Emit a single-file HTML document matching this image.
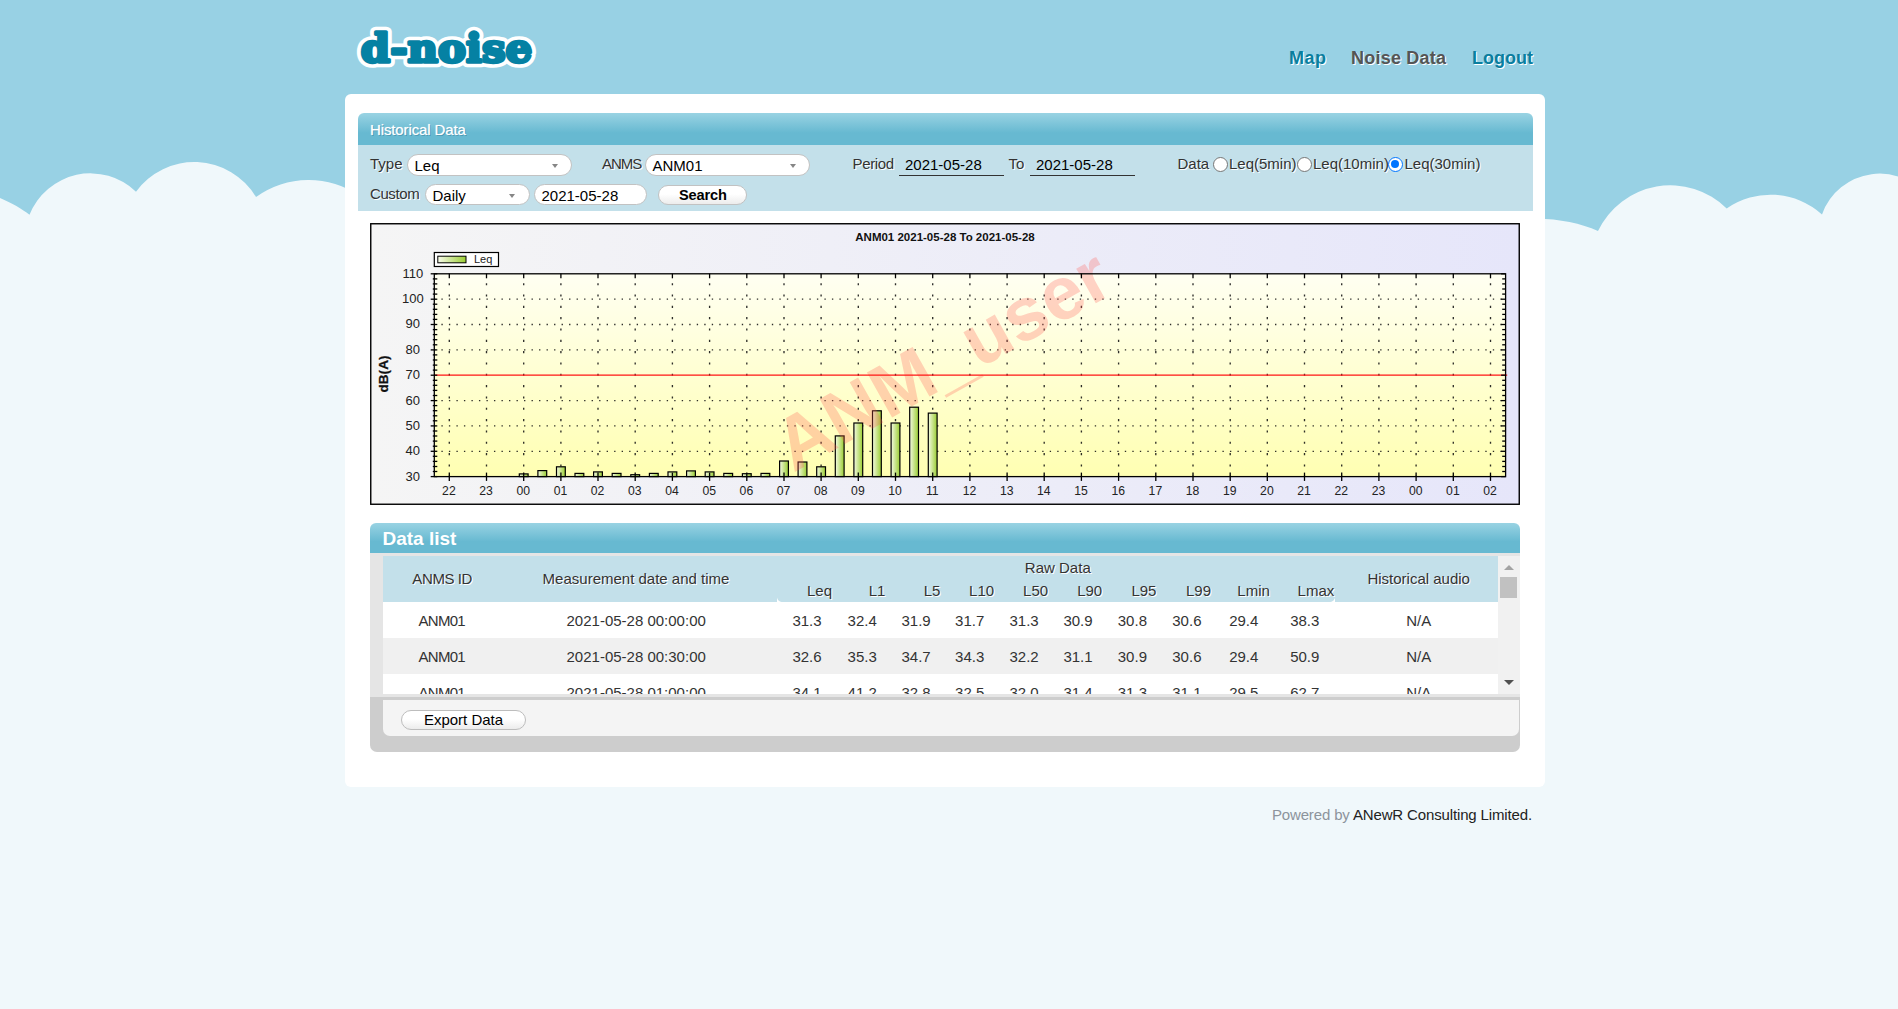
<!DOCTYPE html><html><head><meta charset="utf-8"><title>d-noise</title><style>
html,body{margin:0;padding:0}
body{width:1898px;height:1009px;overflow:hidden;position:relative;background:#f0f8fb;
 font-family:"Liberation Sans",sans-serif;font-size:15px;color:#333}
.sky{position:absolute;left:0;top:0;width:1898px;height:232px;background:#98d1e4}
.clouds{position:absolute;left:0;top:0}
.abs{position:absolute;white-space:nowrap}
.logo{position:absolute;left:345px;top:15px}
.nav a{position:absolute;top:47px;font-weight:bold;font-size:18px;line-height:22px;text-decoration:none;color:#0a7e9f;text-shadow:1px 1px 0 #fff;white-space:nowrap}
.nav a.cur{color:#555}
.panel{position:absolute;left:345px;top:94px;width:1200px;height:693px;background:#fff;border-radius:6px}
.bar{position:absolute;background:linear-gradient(to bottom,#99d3e3 0%,#67b9d1 62%,#67b9d1 100%);border-radius:6px 6px 0 0;color:#fff}
.form{position:absolute;left:358px;top:145px;width:1175px;height:65.5px;background:#c3e0ea}
.lbl{position:absolute;white-space:nowrap;font-size:15px;line-height:18px;color:#333;text-shadow:1px 1px 0 #fff}
.pill{position:absolute;box-sizing:border-box;background:#fff;border:1px solid #c2c2c2;border-radius:11px;font-size:15px;color:#000;white-space:nowrap}
.pill span{position:absolute;left:6.5px;top:2px;line-height:18px}
.pill i{position:absolute;width:0;height:0;border-left:3.4px solid transparent;border-right:3.4px solid transparent;border-top:4.2px solid #868686;top:9.3px}
.uinp{position:absolute;box-sizing:border-box;border-bottom:1px solid #333;font-size:15px;color:#000;line-height:18px;white-space:nowrap}
.td,.th{position:absolute;width:200px;text-align:center;font-size:15px;line-height:20px;white-space:nowrap;color:#333}
.th{text-shadow:1px 1px 0 #fff}
.radio{position:absolute;box-sizing:border-box;width:15.2px;height:15.2px;border-radius:50%;border:1.3px solid #767676;background:#fff}
.radio.on{border:1.7px solid #0075ff}
.radio.on::after{content:"";position:absolute;left:1.6px;top:1.6px;width:8.6px;height:8.6px;border-radius:50%;background:#0075ff}
</style></head><body><div class="sky"></div><svg class="clouds" width="1898" height="260" viewBox="0 0 1898 260"><path d="M 0 260 L 0 198 C 12 203 22 209 29.5 214.8 A 65.6 65.6 0 0 1 136.0 191.7 A 72.0 72.0 0 0 1 256.0 197.0 A 90.0 90.0 0 0 1 360.0 196.0 L 360 260 Z" fill="#f0f8fb"/><path d="M 1530 260 L 1530 219 C 1555 218 1580 223 1598 231 A 80.1 80.1 0 0 1 1726.7 208.5 A 76.9 76.9 0 0 1 1822.0 214.4 A 61.2 61.2 0 0 1 1930.0 200.0 L 1930 260 Z" fill="#f0f8fb"/></svg><svg class="logo" width="210" height="70" viewBox="0 0 210 70"><text x="15.8" y="47.3" font-family="DejaVu Serif, Liberation Serif, serif" font-weight="bold" font-size="39.5" textLength="171.5" lengthAdjust="spacingAndGlyphs" fill="#fff" stroke="#fff" stroke-width="10.6" stroke-linejoin="round">d-noise</text><text x="15.8" y="47.3" font-family="DejaVu Serif, Liberation Serif, serif" font-weight="bold" font-size="39.5" textLength="171.5" lengthAdjust="spacingAndGlyphs" fill="#0581a3" stroke="#0581a3" stroke-width="3.3" stroke-linejoin="round">d-noise</text></svg><div class="nav"><a style="left:1289px;letter-spacing:0.5px" href="#">Map</a><a class="cur" style="left:1351px;letter-spacing:0.22px" href="#">Noise Data</a><a style="left:1472px" href="#">Logout</a></div><div class="panel"></div><div class="form"></div><div class="bar" style="left:358px;top:113px;width:1175px;height:32px"><span class="abs" style="left:12px;top:8px;font-size:15px;line-height:18px;letter-spacing:-0.12px;text-shadow:0 0 1px rgba(255,255,255,.6),1px 1px 0 rgba(0,70,100,.3)">Historical Data</span></div><span class="lbl" style="left:370px;top:155px;letter-spacing:0px">Type</span><div class="pill" style="left:407px;top:154px;width:164.5px;height:21.6px"><span>Leq</span><i style="left:144.1px"></i></div><span class="lbl" style="left:602px;top:155px;letter-spacing:-1.05px">ANMS</span><div class="pill" style="left:645px;top:154px;width:164.5px;height:21.6px"><span>ANM01</span><i style="left:144.1px"></i></div><span class="lbl" style="left:852.5px;top:155px;letter-spacing:-0.35px">Period</span><div class="uinp" style="left:899px;top:154px;width:105px;height:22px"><span class="abs" style="left:6px;top:2px">2021-05-28</span></div><span class="lbl" style="left:1008.5px;top:155px;letter-spacing:0px">To</span><div class="uinp" style="left:1030px;top:154px;width:105px;height:22px"><span class="abs" style="left:6px;top:2px">2021-05-28</span></div><span class="lbl" style="left:1177.5px;top:155px;letter-spacing:0px">Data</span><span class="radio" style="left:1212.9px;top:157px"></span><span class="lbl" style="left:1229px;top:155px;letter-spacing:0px">Leq(5min)</span><span class="radio" style="left:1296.6px;top:157px"></span><span class="lbl" style="left:1313px;top:155px;letter-spacing:0px">Leq(10min)</span><span class="radio on" style="left:1388px;top:157px"></span><span class="lbl" style="left:1404.5px;top:155px;letter-spacing:0px">Leq(30min)</span><span class="lbl" style="left:370px;top:185px;letter-spacing:-0.4px">Custom</span><div class="pill" style="left:425px;top:184.2px;width:104.5px;height:21.2px"><span>Daily</span><i style="left:82.9px"></i></div><div class="pill" style="left:534px;top:184.2px;width:112.5px;height:21.2px"><span>2021-05-28</span></div><div class="pill" style="left:658.3px;top:185.3px;width:89.2px;height:19.5px;border-radius:10px;background:linear-gradient(#fff 45%,#ececec)"><span style="left:0;width:87.2px;text-align:center;font-weight:bold;font-size:14.6px;letter-spacing:-0.15px;top:0">Search</span></div><svg class="chart" style="position:absolute;left:370px;top:223px" width="1150" height="282" viewBox="0 0 1150 282"><defs><linearGradient id="gbg" x1="0" y1="0" x2="1" y2="0"><stop offset="0" stop-color="#f5f5f5"/><stop offset="1" stop-color="#e6e6fa"/></linearGradient><linearGradient id="gpl" x1="0" y1="0" x2="0" y2="1"><stop offset="0" stop-color="#fffff2"/><stop offset="1" stop-color="#ffffb2"/></linearGradient><linearGradient id="gbar" x1="0" y1="0" x2="1" y2="0"><stop offset="0" stop-color="#f4fae2"/><stop offset="1" stop-color="#9acd32"/></linearGradient></defs><rect x="0.75" y="0.75" width="1148.5" height="280.5" fill="url(#gbg)" stroke="#000" stroke-width="1.4"/><rect x="64.30000000000001" y="50.80000000000001" width="1071.3" height="202.8" fill="url(#gpl)"/><g stroke="#111" stroke-opacity="0.88" fill="none"><line x1="79.3" y1="50.80000000000001" x2="79.3" y2="253.60000000000002" stroke-dasharray="2.1 9.23" stroke-dashoffset="2.0" stroke-width="1.35"/><line x1="116.5" y1="50.80000000000001" x2="116.5" y2="253.60000000000002" stroke-dasharray="2.1 9.23" stroke-dashoffset="2.0" stroke-width="1.35"/><line x1="153.7" y1="50.80000000000001" x2="153.7" y2="253.60000000000002" stroke-dasharray="2.1 9.23" stroke-dashoffset="2.0" stroke-width="1.35"/><line x1="190.9" y1="50.80000000000001" x2="190.9" y2="253.60000000000002" stroke-dasharray="2.1 9.23" stroke-dashoffset="2.0" stroke-width="1.35"/><line x1="228.0" y1="50.80000000000001" x2="228.0" y2="253.60000000000002" stroke-dasharray="2.1 9.23" stroke-dashoffset="2.0" stroke-width="1.35"/><line x1="265.2" y1="50.80000000000001" x2="265.2" y2="253.60000000000002" stroke-dasharray="2.1 9.23" stroke-dashoffset="2.0" stroke-width="1.35"/><line x1="302.4" y1="50.80000000000001" x2="302.4" y2="253.60000000000002" stroke-dasharray="2.1 9.23" stroke-dashoffset="2.0" stroke-width="1.35"/><line x1="339.6" y1="50.80000000000001" x2="339.6" y2="253.60000000000002" stroke-dasharray="2.1 9.23" stroke-dashoffset="2.0" stroke-width="1.35"/><line x1="376.8" y1="50.80000000000001" x2="376.8" y2="253.60000000000002" stroke-dasharray="2.1 9.23" stroke-dashoffset="2.0" stroke-width="1.35"/><line x1="414.0" y1="50.80000000000001" x2="414.0" y2="253.60000000000002" stroke-dasharray="2.1 9.23" stroke-dashoffset="2.0" stroke-width="1.35"/><line x1="451.1" y1="50.80000000000001" x2="451.1" y2="253.60000000000002" stroke-dasharray="2.1 9.23" stroke-dashoffset="2.0" stroke-width="1.35"/><line x1="488.3" y1="50.80000000000001" x2="488.3" y2="253.60000000000002" stroke-dasharray="2.1 9.23" stroke-dashoffset="2.0" stroke-width="1.35"/><line x1="525.5" y1="50.80000000000001" x2="525.5" y2="253.60000000000002" stroke-dasharray="2.1 9.23" stroke-dashoffset="2.0" stroke-width="1.35"/><line x1="562.7" y1="50.80000000000001" x2="562.7" y2="253.60000000000002" stroke-dasharray="2.1 9.23" stroke-dashoffset="2.0" stroke-width="1.35"/><line x1="599.9" y1="50.80000000000001" x2="599.9" y2="253.60000000000002" stroke-dasharray="2.1 9.23" stroke-dashoffset="2.0" stroke-width="1.35"/><line x1="637.1" y1="50.80000000000001" x2="637.1" y2="253.60000000000002" stroke-dasharray="2.1 9.23" stroke-dashoffset="2.0" stroke-width="1.35"/><line x1="674.2" y1="50.80000000000001" x2="674.2" y2="253.60000000000002" stroke-dasharray="2.1 9.23" stroke-dashoffset="2.0" stroke-width="1.35"/><line x1="711.4" y1="50.80000000000001" x2="711.4" y2="253.60000000000002" stroke-dasharray="2.1 9.23" stroke-dashoffset="2.0" stroke-width="1.35"/><line x1="748.6" y1="50.80000000000001" x2="748.6" y2="253.60000000000002" stroke-dasharray="2.1 9.23" stroke-dashoffset="2.0" stroke-width="1.35"/><line x1="785.8" y1="50.80000000000001" x2="785.8" y2="253.60000000000002" stroke-dasharray="2.1 9.23" stroke-dashoffset="2.0" stroke-width="1.35"/><line x1="823.0" y1="50.80000000000001" x2="823.0" y2="253.60000000000002" stroke-dasharray="2.1 9.23" stroke-dashoffset="2.0" stroke-width="1.35"/><line x1="860.2" y1="50.80000000000001" x2="860.2" y2="253.60000000000002" stroke-dasharray="2.1 9.23" stroke-dashoffset="2.0" stroke-width="1.35"/><line x1="897.3" y1="50.80000000000001" x2="897.3" y2="253.60000000000002" stroke-dasharray="2.1 9.23" stroke-dashoffset="2.0" stroke-width="1.35"/><line x1="934.5" y1="50.80000000000001" x2="934.5" y2="253.60000000000002" stroke-dasharray="2.1 9.23" stroke-dashoffset="2.0" stroke-width="1.35"/><line x1="971.7" y1="50.80000000000001" x2="971.7" y2="253.60000000000002" stroke-dasharray="2.1 9.23" stroke-dashoffset="2.0" stroke-width="1.35"/><line x1="1008.9" y1="50.80000000000001" x2="1008.9" y2="253.60000000000002" stroke-dasharray="2.1 9.23" stroke-dashoffset="2.0" stroke-width="1.35"/><line x1="1046.1" y1="50.80000000000001" x2="1046.1" y2="253.60000000000002" stroke-dasharray="2.1 9.23" stroke-dashoffset="2.0" stroke-width="1.35"/><line x1="1083.3" y1="50.80000000000001" x2="1083.3" y2="253.60000000000002" stroke-dasharray="2.1 9.23" stroke-dashoffset="2.0" stroke-width="1.35"/><line x1="1120.5" y1="50.80000000000001" x2="1120.5" y2="253.60000000000002" stroke-dasharray="2.1 9.23" stroke-dashoffset="2.0" stroke-width="1.35"/><line x1="64.30000000000001" y1="228.3" x2="1135.6" y2="228.3" stroke-dasharray="1.35 6.16" stroke-dashoffset="0.4" stroke-width="1.3"/><line x1="64.30000000000001" y1="202.9" x2="1135.6" y2="202.9" stroke-dasharray="1.35 6.16" stroke-dashoffset="0.4" stroke-width="1.3"/><line x1="64.30000000000001" y1="177.6" x2="1135.6" y2="177.6" stroke-dasharray="1.35 6.16" stroke-dashoffset="0.4" stroke-width="1.3"/><line x1="64.30000000000001" y1="126.9" x2="1135.6" y2="126.9" stroke-dasharray="1.35 6.16" stroke-dashoffset="0.4" stroke-width="1.3"/><line x1="64.30000000000001" y1="101.5" x2="1135.6" y2="101.5" stroke-dasharray="1.35 6.16" stroke-dashoffset="0.4" stroke-width="1.3"/><line x1="64.30000000000001" y1="76.2" x2="1135.6" y2="76.2" stroke-dasharray="1.35 6.16" stroke-dashoffset="0.4" stroke-width="1.3"/></g><g fill="url(#gbar)" stroke="#000" stroke-width="1.2"><rect x="149.3" y="250.9" width="8.8" height="2.7"/><rect x="167.9" y="247.6" width="8.8" height="6.0"/><rect x="186.5" y="243.8" width="8.8" height="9.8"/><rect x="205.0" y="250.4" width="8.8" height="3.2"/><rect x="223.6" y="248.9" width="8.8" height="4.7"/><rect x="242.2" y="250.4" width="8.8" height="3.2"/><rect x="260.8" y="251.7" width="8.8" height="1.9"/><rect x="279.4" y="250.4" width="8.8" height="3.2"/><rect x="298.0" y="248.9" width="8.8" height="4.7"/><rect x="316.6" y="247.9" width="8.8" height="5.7"/><rect x="335.2" y="248.9" width="8.8" height="4.7"/><rect x="353.8" y="250.4" width="8.8" height="3.2"/><rect x="372.4" y="250.7" width="8.8" height="2.9"/><rect x="391.0" y="250.4" width="8.8" height="3.2"/><rect x="409.6" y="238.0" width="8.8" height="15.6"/><rect x="428.1" y="239.0" width="8.8" height="14.6"/><rect x="446.7" y="243.8" width="8.8" height="9.8"/><rect x="465.3" y="212.9" width="8.8" height="40.7"/><rect x="483.9" y="200.0" width="8.8" height="53.6"/><rect x="502.5" y="187.8" width="8.8" height="65.8"/><rect x="521.1" y="200.0" width="8.8" height="53.6"/><rect x="539.7" y="184.2" width="8.8" height="69.4"/><rect x="558.3" y="190.1" width="8.8" height="63.5"/></g><text transform="translate(423.3,250) rotate(-29.3)" font-family="Liberation Sans, sans-serif" font-weight="bold" font-size="75" fill="#ff5a50" fill-opacity="0.27">ANM_user</text><line x1="64.30000000000001" y1="152.2" x2="1137.1999999999998" y2="152.2" stroke="#ff1414" stroke-width="1.3"/><g stroke="#000" stroke-width="1.3" fill="none"><rect x="64.30000000000001" y="50.80000000000001" width="1071.3" height="202.8" fill="none"/><line x1="79.3" y1="50.80000000000001" x2="79.3" y2="55.30000000000001"/><line x1="79.3" y1="249.60000000000002" x2="79.3" y2="257.90000000000003"/><line x1="116.5" y1="50.80000000000001" x2="116.5" y2="55.30000000000001"/><line x1="116.5" y1="249.60000000000002" x2="116.5" y2="257.90000000000003"/><line x1="153.7" y1="50.80000000000001" x2="153.7" y2="55.30000000000001"/><line x1="153.7" y1="249.60000000000002" x2="153.7" y2="257.90000000000003"/><line x1="190.9" y1="50.80000000000001" x2="190.9" y2="55.30000000000001"/><line x1="190.9" y1="249.60000000000002" x2="190.9" y2="257.90000000000003"/><line x1="228.0" y1="50.80000000000001" x2="228.0" y2="55.30000000000001"/><line x1="228.0" y1="249.60000000000002" x2="228.0" y2="257.90000000000003"/><line x1="265.2" y1="50.80000000000001" x2="265.2" y2="55.30000000000001"/><line x1="265.2" y1="249.60000000000002" x2="265.2" y2="257.90000000000003"/><line x1="302.4" y1="50.80000000000001" x2="302.4" y2="55.30000000000001"/><line x1="302.4" y1="249.60000000000002" x2="302.4" y2="257.90000000000003"/><line x1="339.6" y1="50.80000000000001" x2="339.6" y2="55.30000000000001"/><line x1="339.6" y1="249.60000000000002" x2="339.6" y2="257.90000000000003"/><line x1="376.8" y1="50.80000000000001" x2="376.8" y2="55.30000000000001"/><line x1="376.8" y1="249.60000000000002" x2="376.8" y2="257.90000000000003"/><line x1="414.0" y1="50.80000000000001" x2="414.0" y2="55.30000000000001"/><line x1="414.0" y1="249.60000000000002" x2="414.0" y2="257.90000000000003"/><line x1="451.1" y1="50.80000000000001" x2="451.1" y2="55.30000000000001"/><line x1="451.1" y1="249.60000000000002" x2="451.1" y2="257.90000000000003"/><line x1="488.3" y1="50.80000000000001" x2="488.3" y2="55.30000000000001"/><line x1="488.3" y1="249.60000000000002" x2="488.3" y2="257.90000000000003"/><line x1="525.5" y1="50.80000000000001" x2="525.5" y2="55.30000000000001"/><line x1="525.5" y1="249.60000000000002" x2="525.5" y2="257.90000000000003"/><line x1="562.7" y1="50.80000000000001" x2="562.7" y2="55.30000000000001"/><line x1="562.7" y1="249.60000000000002" x2="562.7" y2="257.90000000000003"/><line x1="599.9" y1="50.80000000000001" x2="599.9" y2="55.30000000000001"/><line x1="599.9" y1="249.60000000000002" x2="599.9" y2="257.90000000000003"/><line x1="637.1" y1="50.80000000000001" x2="637.1" y2="55.30000000000001"/><line x1="637.1" y1="249.60000000000002" x2="637.1" y2="257.90000000000003"/><line x1="674.2" y1="50.80000000000001" x2="674.2" y2="55.30000000000001"/><line x1="674.2" y1="249.60000000000002" x2="674.2" y2="257.90000000000003"/><line x1="711.4" y1="50.80000000000001" x2="711.4" y2="55.30000000000001"/><line x1="711.4" y1="249.60000000000002" x2="711.4" y2="257.90000000000003"/><line x1="748.6" y1="50.80000000000001" x2="748.6" y2="55.30000000000001"/><line x1="748.6" y1="249.60000000000002" x2="748.6" y2="257.90000000000003"/><line x1="785.8" y1="50.80000000000001" x2="785.8" y2="55.30000000000001"/><line x1="785.8" y1="249.60000000000002" x2="785.8" y2="257.90000000000003"/><line x1="823.0" y1="50.80000000000001" x2="823.0" y2="55.30000000000001"/><line x1="823.0" y1="249.60000000000002" x2="823.0" y2="257.90000000000003"/><line x1="860.2" y1="50.80000000000001" x2="860.2" y2="55.30000000000001"/><line x1="860.2" y1="249.60000000000002" x2="860.2" y2="257.90000000000003"/><line x1="897.3" y1="50.80000000000001" x2="897.3" y2="55.30000000000001"/><line x1="897.3" y1="249.60000000000002" x2="897.3" y2="257.90000000000003"/><line x1="934.5" y1="50.80000000000001" x2="934.5" y2="55.30000000000001"/><line x1="934.5" y1="249.60000000000002" x2="934.5" y2="257.90000000000003"/><line x1="971.7" y1="50.80000000000001" x2="971.7" y2="55.30000000000001"/><line x1="971.7" y1="249.60000000000002" x2="971.7" y2="257.90000000000003"/><line x1="1008.9" y1="50.80000000000001" x2="1008.9" y2="55.30000000000001"/><line x1="1008.9" y1="249.60000000000002" x2="1008.9" y2="257.90000000000003"/><line x1="1046.1" y1="50.80000000000001" x2="1046.1" y2="55.30000000000001"/><line x1="1046.1" y1="249.60000000000002" x2="1046.1" y2="257.90000000000003"/><line x1="1083.3" y1="50.80000000000001" x2="1083.3" y2="55.30000000000001"/><line x1="1083.3" y1="249.60000000000002" x2="1083.3" y2="257.90000000000003"/><line x1="1120.5" y1="50.80000000000001" x2="1120.5" y2="55.30000000000001"/><line x1="1120.5" y1="249.60000000000002" x2="1120.5" y2="257.90000000000003"/><line x1="60.70000000000001" y1="253.6" x2="67.30000000000001" y2="253.6"/><line x1="1131.1" y1="253.6" x2="1135.6" y2="253.6"/><line x1="62.80000000000001" y1="248.5" x2="67.30000000000001" y2="248.5"/><line x1="1132.1999999999998" y1="248.5" x2="1135.6" y2="248.5"/><line x1="62.80000000000001" y1="243.5" x2="67.30000000000001" y2="243.5"/><line x1="1132.1999999999998" y1="243.5" x2="1135.6" y2="243.5"/><line x1="62.80000000000001" y1="238.4" x2="67.30000000000001" y2="238.4"/><line x1="1132.1999999999998" y1="238.4" x2="1135.6" y2="238.4"/><line x1="62.80000000000001" y1="233.3" x2="67.30000000000001" y2="233.3"/><line x1="1132.1999999999998" y1="233.3" x2="1135.6" y2="233.3"/><line x1="60.70000000000001" y1="228.3" x2="67.30000000000001" y2="228.3"/><line x1="1131.1" y1="228.3" x2="1135.6" y2="228.3"/><line x1="62.80000000000001" y1="223.2" x2="67.30000000000001" y2="223.2"/><line x1="1132.1999999999998" y1="223.2" x2="1135.6" y2="223.2"/><line x1="62.80000000000001" y1="218.1" x2="67.30000000000001" y2="218.1"/><line x1="1132.1999999999998" y1="218.1" x2="1135.6" y2="218.1"/><line x1="62.80000000000001" y1="213.0" x2="67.30000000000001" y2="213.0"/><line x1="1132.1999999999998" y1="213.0" x2="1135.6" y2="213.0"/><line x1="62.80000000000001" y1="208.0" x2="67.30000000000001" y2="208.0"/><line x1="1132.1999999999998" y1="208.0" x2="1135.6" y2="208.0"/><line x1="60.70000000000001" y1="202.9" x2="67.30000000000001" y2="202.9"/><line x1="1131.1" y1="202.9" x2="1135.6" y2="202.9"/><line x1="62.80000000000001" y1="197.8" x2="67.30000000000001" y2="197.8"/><line x1="1132.1999999999998" y1="197.8" x2="1135.6" y2="197.8"/><line x1="62.80000000000001" y1="192.8" x2="67.30000000000001" y2="192.8"/><line x1="1132.1999999999998" y1="192.8" x2="1135.6" y2="192.8"/><line x1="62.80000000000001" y1="187.7" x2="67.30000000000001" y2="187.7"/><line x1="1132.1999999999998" y1="187.7" x2="1135.6" y2="187.7"/><line x1="62.80000000000001" y1="182.6" x2="67.30000000000001" y2="182.6"/><line x1="1132.1999999999998" y1="182.6" x2="1135.6" y2="182.6"/><line x1="60.70000000000001" y1="177.6" x2="67.30000000000001" y2="177.6"/><line x1="1131.1" y1="177.6" x2="1135.6" y2="177.6"/><line x1="62.80000000000001" y1="172.5" x2="67.30000000000001" y2="172.5"/><line x1="1132.1999999999998" y1="172.5" x2="1135.6" y2="172.5"/><line x1="62.80000000000001" y1="167.4" x2="67.30000000000001" y2="167.4"/><line x1="1132.1999999999998" y1="167.4" x2="1135.6" y2="167.4"/><line x1="62.80000000000001" y1="162.3" x2="67.30000000000001" y2="162.3"/><line x1="1132.1999999999998" y1="162.3" x2="1135.6" y2="162.3"/><line x1="62.80000000000001" y1="157.3" x2="67.30000000000001" y2="157.3"/><line x1="1132.1999999999998" y1="157.3" x2="1135.6" y2="157.3"/><line x1="60.70000000000001" y1="152.2" x2="67.30000000000001" y2="152.2"/><line x1="1131.1" y1="152.2" x2="1135.6" y2="152.2"/><line x1="62.80000000000001" y1="147.1" x2="67.30000000000001" y2="147.1"/><line x1="1132.1999999999998" y1="147.1" x2="1135.6" y2="147.1"/><line x1="62.80000000000001" y1="142.1" x2="67.30000000000001" y2="142.1"/><line x1="1132.1999999999998" y1="142.1" x2="1135.6" y2="142.1"/><line x1="62.80000000000001" y1="137.0" x2="67.30000000000001" y2="137.0"/><line x1="1132.1999999999998" y1="137.0" x2="1135.6" y2="137.0"/><line x1="62.80000000000001" y1="131.9" x2="67.30000000000001" y2="131.9"/><line x1="1132.1999999999998" y1="131.9" x2="1135.6" y2="131.9"/><line x1="60.70000000000001" y1="126.9" x2="67.30000000000001" y2="126.9"/><line x1="1131.1" y1="126.9" x2="1135.6" y2="126.9"/><line x1="62.80000000000001" y1="121.8" x2="67.30000000000001" y2="121.8"/><line x1="1132.1999999999998" y1="121.8" x2="1135.6" y2="121.8"/><line x1="62.80000000000001" y1="116.7" x2="67.30000000000001" y2="116.7"/><line x1="1132.1999999999998" y1="116.7" x2="1135.6" y2="116.7"/><line x1="62.80000000000001" y1="111.6" x2="67.30000000000001" y2="111.6"/><line x1="1132.1999999999998" y1="111.6" x2="1135.6" y2="111.6"/><line x1="62.80000000000001" y1="106.6" x2="67.30000000000001" y2="106.6"/><line x1="1132.1999999999998" y1="106.6" x2="1135.6" y2="106.6"/><line x1="60.70000000000001" y1="101.5" x2="67.30000000000001" y2="101.5"/><line x1="1131.1" y1="101.5" x2="1135.6" y2="101.5"/><line x1="62.80000000000001" y1="96.4" x2="67.30000000000001" y2="96.4"/><line x1="1132.1999999999998" y1="96.4" x2="1135.6" y2="96.4"/><line x1="62.80000000000001" y1="91.4" x2="67.30000000000001" y2="91.4"/><line x1="1132.1999999999998" y1="91.4" x2="1135.6" y2="91.4"/><line x1="62.80000000000001" y1="86.3" x2="67.30000000000001" y2="86.3"/><line x1="1132.1999999999998" y1="86.3" x2="1135.6" y2="86.3"/><line x1="62.80000000000001" y1="81.2" x2="67.30000000000001" y2="81.2"/><line x1="1132.1999999999998" y1="81.2" x2="1135.6" y2="81.2"/><line x1="60.70000000000001" y1="76.2" x2="67.30000000000001" y2="76.2"/><line x1="1131.1" y1="76.2" x2="1135.6" y2="76.2"/><line x1="62.80000000000001" y1="71.1" x2="67.30000000000001" y2="71.1"/><line x1="1132.1999999999998" y1="71.1" x2="1135.6" y2="71.1"/><line x1="62.80000000000001" y1="66.0" x2="67.30000000000001" y2="66.0"/><line x1="1132.1999999999998" y1="66.0" x2="1135.6" y2="66.0"/><line x1="62.80000000000001" y1="60.9" x2="67.30000000000001" y2="60.9"/><line x1="1132.1999999999998" y1="60.9" x2="1135.6" y2="60.9"/><line x1="62.80000000000001" y1="55.9" x2="67.30000000000001" y2="55.9"/><line x1="1132.1999999999998" y1="55.9" x2="1135.6" y2="55.9"/><line x1="60.70000000000001" y1="50.8" x2="67.30000000000001" y2="50.8"/><line x1="1131.1" y1="50.8" x2="1135.6" y2="50.8"/></g><g font-family="Liberation Sans, sans-serif" fill="#222"><text x="42.80000000000001" y="257.5" text-anchor="middle" font-size="13">30</text><text x="42.80000000000001" y="232.2" text-anchor="middle" font-size="13">40</text><text x="42.80000000000001" y="206.8" text-anchor="middle" font-size="13">50</text><text x="42.80000000000001" y="181.5" text-anchor="middle" font-size="13">60</text><text x="42.80000000000001" y="156.1" text-anchor="middle" font-size="13">70</text><text x="42.80000000000001" y="130.8" text-anchor="middle" font-size="13">80</text><text x="42.80000000000001" y="105.4" text-anchor="middle" font-size="13">90</text><text x="42.80000000000001" y="80.1" text-anchor="middle" font-size="13">100</text><text x="42.80000000000001" y="54.7" text-anchor="middle" font-size="13">110</text><text x="78.9" y="271.9" text-anchor="middle" font-size="12.2">22</text><text x="116.1" y="271.9" text-anchor="middle" font-size="12.2">23</text><text x="153.3" y="271.9" text-anchor="middle" font-size="12.2">00</text><text x="190.5" y="271.9" text-anchor="middle" font-size="12.2">01</text><text x="227.6" y="271.9" text-anchor="middle" font-size="12.2">02</text><text x="264.8" y="271.9" text-anchor="middle" font-size="12.2">03</text><text x="302.0" y="271.9" text-anchor="middle" font-size="12.2">04</text><text x="339.2" y="271.9" text-anchor="middle" font-size="12.2">05</text><text x="376.4" y="271.9" text-anchor="middle" font-size="12.2">06</text><text x="413.6" y="271.9" text-anchor="middle" font-size="12.2">07</text><text x="450.7" y="271.9" text-anchor="middle" font-size="12.2">08</text><text x="487.9" y="271.9" text-anchor="middle" font-size="12.2">09</text><text x="525.1" y="271.9" text-anchor="middle" font-size="12.2">10</text><text x="562.3" y="271.9" text-anchor="middle" font-size="12.2">11</text><text x="599.5" y="271.9" text-anchor="middle" font-size="12.2">12</text><text x="636.7" y="271.9" text-anchor="middle" font-size="12.2">13</text><text x="673.8" y="271.9" text-anchor="middle" font-size="12.2">14</text><text x="711.0" y="271.9" text-anchor="middle" font-size="12.2">15</text><text x="748.2" y="271.9" text-anchor="middle" font-size="12.2">16</text><text x="785.4" y="271.9" text-anchor="middle" font-size="12.2">17</text><text x="822.6" y="271.9" text-anchor="middle" font-size="12.2">18</text><text x="859.8" y="271.9" text-anchor="middle" font-size="12.2">19</text><text x="896.9" y="271.9" text-anchor="middle" font-size="12.2">20</text><text x="934.1" y="271.9" text-anchor="middle" font-size="12.2">21</text><text x="971.3" y="271.9" text-anchor="middle" font-size="12.2">22</text><text x="1008.5" y="271.9" text-anchor="middle" font-size="12.2">23</text><text x="1045.7" y="271.9" text-anchor="middle" font-size="12.2">00</text><text x="1082.9" y="271.9" text-anchor="middle" font-size="12.2">01</text><text x="1120.1" y="271.9" text-anchor="middle" font-size="12.2">02</text></g><text x="575" y="18.400000000000006" text-anchor="middle" font-family="Liberation Sans, sans-serif" font-weight="bold" font-size="11.5" fill="#111">ANM01 2021-05-28 To 2021-05-28</text><text transform="translate(18.30000000000001,151) rotate(-90)" text-anchor="middle" font-family="Liberation Sans, sans-serif" font-weight="bold" font-size="13.6" fill="#111" stroke="#111" stroke-width="0.25">dB(A)</text><rect x="64.30000000000001" y="29.5" width="64.2" height="14" fill="#fff" stroke="#000" stroke-width="1.2"/><linearGradient id="gleg" x1="0" y1="0" x2="1" y2="0"><stop offset="0" stop-color="#f8fbea"/><stop offset="1" stop-color="#9acd32"/></linearGradient><rect x="67.80000000000001" y="33.19999999999999" width="28.2" height="6.6" fill="url(#gleg)" stroke="#000" stroke-width="1"/><text x="104" y="40" font-family="Liberation Sans, sans-serif" font-size="11" fill="#222">Leq</text></svg><div class="abs" style="left:370px;top:553px;width:1150px;height:198.5px;background:#cdcdcd;border-radius:0 0 7px 7px"></div><div class="abs" style="left:370px;top:553px;width:1150px;height:143.8px;background:#e5e5e5"></div><div class="bar" style="left:370px;top:523px;width:1150px;height:30px"><span class="abs" style="left:12.5px;top:5px;font-size:19px;line-height:22px;font-weight:bold;letter-spacing:0px">Data list</span></div><div class="abs" style="left:383px;top:556px;width:1136.5px;height:138px;background:#fff;overflow:hidden"><div class="abs" style="left:0;top:0;width:1115px;height:45.8px;background:#c3e0ea"></div><div class="abs" style="left:0;top:81.8px;width:1115px;height:36px;background:#f0f0f0"></div><div class="abs" style="left:394px;top:40.8px;width:5px;height:5px;background:radial-gradient(circle at 100% 0,#c3e0ea 4.5px,#fff 5.3px)"></div><div class="abs" style="left:947px;top:40.8px;width:5px;height:5px;background:radial-gradient(circle at 0 0,#c3e0ea 4.5px,#fff 5.3px)"></div><div class="abs" style="left:1115px;top:0;width:21.5px;height:138px;background:#f1f1f1"></div><div class="abs" style="left:1117.2px;top:21px;width:16.6px;height:20.7px;background:#c1c1c1"></div><div class="abs" style="left:1120.5px;top:8.8px;width:0;height:0;border-left:5px solid transparent;border-right:5px solid transparent;border-bottom:5.2px solid #a3a3a3"></div><div class="abs" style="left:1120.5px;top:123.8px;width:0;height:0;border-left:5px solid transparent;border-right:5px solid transparent;border-top:5.2px solid #505050"></div><span class="th" style="left:-40.8px;top:12.6px;letter-spacing:-0.4px">ANMS ID</span><span class="th" style="left:153.0px;top:12.6px">Measurement date and time</span><span class="th" style="left:574.8px;top:1.6px">Raw Data</span><span class="th" style="left:935.7px;top:12.6px">Historical audio</span><span class="th" style="left:336.5px;top:24.8px">Leq</span><span class="th" style="left:394.0px;top:24.8px">L1</span><span class="th" style="left:449.0px;top:24.8px">L5</span><span class="th" style="left:498.6px;top:24.8px">L10</span><span class="th" style="left:552.6px;top:24.8px">L50</span><span class="th" style="left:606.7px;top:24.8px">L90</span><span class="th" style="left:660.9px;top:24.8px">L95</span><span class="th" style="left:715.5px;top:24.8px">L99</span><span class="th" style="left:770.6px;top:24.8px">Lmin</span><span class="th" style="left:832.9px;top:24.8px">Lmax</span><span class="td" style="left:-41.3px;top:55.0px;letter-spacing:-0.75px">ANM01</span><span class="td" style="left:153.2px;top:55.0px">2021-05-28 00:00:00</span><span class="td" style="left:324.0px;top:55.0px">31.3</span><span class="td" style="left:379.2px;top:55.0px">32.4</span><span class="td" style="left:433.1px;top:55.0px">31.9</span><span class="td" style="left:486.7px;top:55.0px">31.7</span><span class="td" style="left:541.1px;top:55.0px">31.3</span><span class="td" style="left:595.0px;top:55.0px">30.9</span><span class="td" style="left:649.4px;top:55.0px">30.8</span><span class="td" style="left:703.9px;top:55.0px">30.6</span><span class="td" style="left:760.8px;top:55.0px">29.4</span><span class="td" style="left:821.8px;top:55.0px">38.3</span><span class="td" style="left:935.7px;top:55.0px">N/A</span><span class="td" style="left:-41.3px;top:91.0px;letter-spacing:-0.75px">ANM01</span><span class="td" style="left:153.2px;top:91.0px">2021-05-28 00:30:00</span><span class="td" style="left:324.0px;top:91.0px">32.6</span><span class="td" style="left:379.2px;top:91.0px">35.3</span><span class="td" style="left:433.1px;top:91.0px">34.7</span><span class="td" style="left:486.7px;top:91.0px">34.3</span><span class="td" style="left:541.1px;top:91.0px">32.2</span><span class="td" style="left:595.0px;top:91.0px">31.1</span><span class="td" style="left:649.4px;top:91.0px">30.9</span><span class="td" style="left:703.9px;top:91.0px">30.6</span><span class="td" style="left:760.8px;top:91.0px">29.4</span><span class="td" style="left:821.8px;top:91.0px">50.9</span><span class="td" style="left:935.7px;top:91.0px">N/A</span><span class="td" style="left:-41.3px;top:127.0px;letter-spacing:-0.75px">ANM01</span><span class="td" style="left:153.2px;top:127.0px">2021-05-28 01:00:00</span><span class="td" style="left:324.0px;top:127.0px">34.1</span><span class="td" style="left:379.2px;top:127.0px">41.2</span><span class="td" style="left:433.1px;top:127.0px">32.8</span><span class="td" style="left:486.7px;top:127.0px">32.5</span><span class="td" style="left:541.1px;top:127.0px">32.0</span><span class="td" style="left:595.0px;top:127.0px">31.4</span><span class="td" style="left:649.4px;top:127.0px">31.3</span><span class="td" style="left:703.9px;top:127.0px">31.1</span><span class="td" style="left:760.8px;top:127.0px">29.5</span><span class="td" style="left:821.8px;top:127.0px">62.7</span><span class="td" style="left:935.7px;top:127.0px">N/A</span></div><div class="abs" style="left:383px;top:700.3px;width:1136.3px;height:35.5px;background:#f4f4f4;border-radius:0 0 7px 7px"></div><div class="pill" style="left:401px;top:710.3px;width:125px;height:19.8px;border-radius:10px;border-color:#bdbdbd;background:linear-gradient(#fff 45%,#ececec)"><span style="left:0;width:123px;text-align:center;top:0">Export Data</span></div><div class="abs" style="right:366px;top:806px;font-size:15px;line-height:18px;letter-spacing:-0.14px;color:#8c949c">Powered by <span style="color:#222">ANewR Consulting Limited.</span></div></body></html>
